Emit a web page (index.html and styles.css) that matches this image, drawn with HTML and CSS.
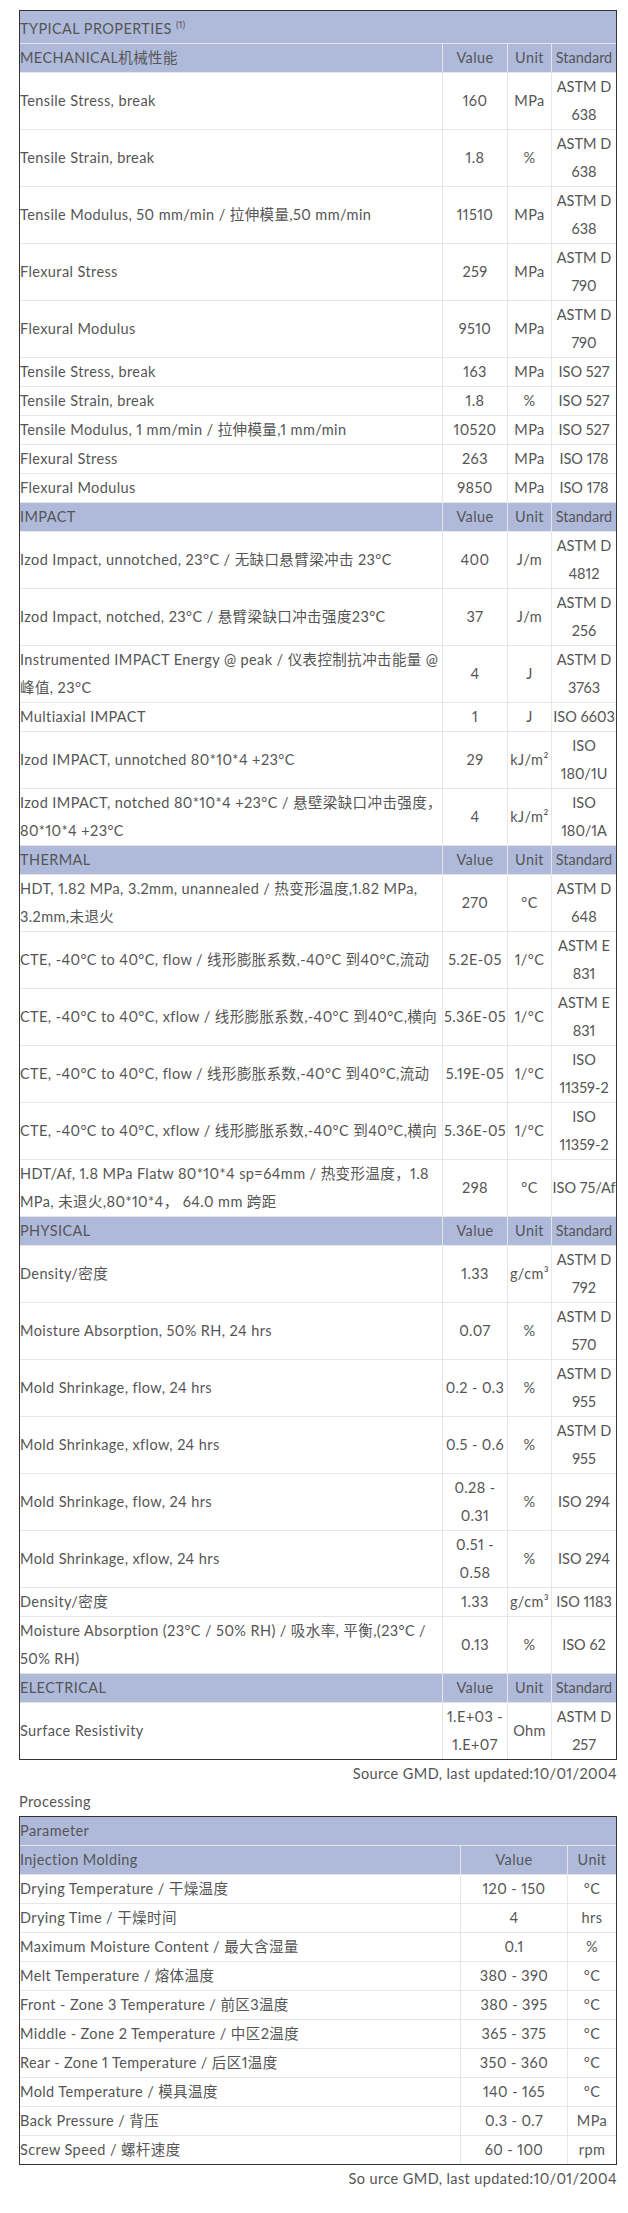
FILE: index.html
```html
<!DOCTYPE html>
<html lang="en">
<head>
<meta charset="utf-8">
<title>Typical Properties</title>
<link rel="stylesheet" href="styles.css">
</head>
<body>
<div class="page">
<table class="props">
<colgroup><col class="c-name"><col class="c-val"><col class="c-unit"><col class="c-std"></colgroup>
<tbody>
<tr class="head title"><td class="name" colspan="4">TYPICAL PROPERTIES <sup>(1)</sup></td></tr>
<tr class="head"><td class="name">MECHANICAL机械性能</td><td>Value</td><td>Unit</td><td class="std">Standard</td></tr>
<tr><td class="name">Tensile Stress, break</td><td>160</td><td>MPa</td><td class="std">ASTM D<br>638</td></tr>
<tr><td class="name">Tensile Strain, break</td><td>1.8</td><td>%</td><td class="std">ASTM D<br>638</td></tr>
<tr><td class="name">Tensile Modulus, 50 mm/min / 拉伸模量,50 mm/min</td><td>11510</td><td>MPa</td><td class="std">ASTM D<br>638</td></tr>
<tr><td class="name">Flexural Stress</td><td>259</td><td>MPa</td><td class="std">ASTM D<br>790</td></tr>
<tr><td class="name">Flexural Modulus</td><td>9510</td><td>MPa</td><td class="std">ASTM D<br>790</td></tr>
<tr><td class="name">Tensile Stress, break</td><td>163</td><td>MPa</td><td class="std">ISO 527</td></tr>
<tr><td class="name">Tensile Strain, break</td><td>1.8</td><td>%</td><td class="std">ISO 527</td></tr>
<tr><td class="name">Tensile Modulus, 1 mm/min / 拉伸模量,1 mm/min</td><td>10520</td><td>MPa</td><td class="std">ISO 527</td></tr>
<tr><td class="name">Flexural Stress</td><td>263</td><td>MPa</td><td class="std">ISO 178</td></tr>
<tr><td class="name">Flexural Modulus</td><td>9850</td><td>MPa</td><td class="std">ISO 178</td></tr>

<tr class="head"><td class="name">IMPACT</td><td>Value</td><td>Unit</td><td class="std">Standard</td></tr>
<tr><td class="name">Izod Impact, unnotched, 23°C / 无缺口悬臂梁冲击 23°C</td><td>400</td><td>J/m</td><td class="std">ASTM D<br>4812</td></tr>
<tr><td class="name">Izod Impact, notched, 23°C / 悬臂梁缺口冲击强度23°C</td><td>37</td><td>J/m</td><td class="std">ASTM D<br>256</td></tr>
<tr><td class="name">Instrumented IMPACT Energy @ peak / 仪表控制抗冲击能量 @<br>峰值, 23°C</td><td>4</td><td>J</td><td class="std">ASTM D<br>3763</td></tr>
<tr><td class="name">Multiaxial IMPACT</td><td>1</td><td>J</td><td class="std">ISO 6603</td></tr>
<tr><td class="name">Izod IMPACT, unnotched 80*10*4 +23°C</td><td>29</td><td>kJ/m²</td><td class="std">ISO<br>180/1U</td></tr>
<tr><td class="name">Izod IMPACT, notched 80*10*4 +23°C / 悬壁梁缺口冲击强度，<br>80*10*4 +23°C</td><td>4</td><td>kJ/m²</td><td class="std">ISO<br>180/1A</td></tr>

<tr class="head"><td class="name">THERMAL</td><td>Value</td><td>Unit</td><td class="std">Standard</td></tr>
<tr><td class="name">HDT, 1.82 MPa, 3.2mm, unannealed / 热变形温度,1.82 MPa,<br>3.2mm,未退火</td><td>270</td><td>°C</td><td class="std">ASTM D<br>648</td></tr>
<tr><td class="name">CTE, -40°C to 40°C, flow / 线形膨胀系数,-40°C 到40°C,流动</td><td>5.2E-05</td><td>1/°C</td><td class="std">ASTM E<br>831</td></tr>
<tr><td class="name">CTE, -40°C to 40°C, xflow / 线形膨胀系数,-40°C 到40°C,横向</td><td>5.36E-05</td><td>1/°C</td><td class="std">ASTM E<br>831</td></tr>
<tr><td class="name">CTE, -40°C to 40°C, flow / 线形膨胀系数,-40°C 到40°C,流动</td><td>5.19E-05</td><td>1/°C</td><td class="std">ISO<br>11359-2</td></tr>
<tr><td class="name">CTE, -40°C to 40°C, xflow / 线形膨胀系数,-40°C 到40°C,横向</td><td>5.36E-05</td><td>1/°C</td><td class="std">ISO<br>11359-2</td></tr>
<tr><td class="name">HDT/Af, 1.8 MPa Flatw 80*10*4 sp=64mm / 热变形温度，1.8<br>MPa, 未退火,80*10*4， 64.0 mm 跨距</td><td>298</td><td>°C</td><td class="std">ISO 75/Af</td></tr>

<tr class="head"><td class="name">PHYSICAL</td><td>Value</td><td>Unit</td><td class="std">Standard</td></tr>
<tr><td class="name">Density/密度</td><td>1.33</td><td>g/cm³</td><td class="std">ASTM D<br>792</td></tr>
<tr><td class="name">Moisture Absorption, 50% RH, 24 hrs</td><td>0.07</td><td>%</td><td class="std">ASTM D<br>570</td></tr>
<tr><td class="name">Mold Shrinkage, flow, 24 hrs</td><td>0.2 - 0.3</td><td>%</td><td class="std">ASTM D<br>955</td></tr>
<tr><td class="name">Mold Shrinkage, xflow, 24 hrs</td><td>0.5 - 0.6</td><td>%</td><td class="std">ASTM D<br>955</td></tr>
<tr><td class="name">Mold Shrinkage, flow, 24 hrs</td><td>0.28 -<br>0.31</td><td>%</td><td class="std">ISO 294</td></tr>
<tr><td class="name">Mold Shrinkage, xflow, 24 hrs</td><td>0.51 -<br>0.58</td><td>%</td><td class="std">ISO 294</td></tr>
<tr><td class="name">Density/密度</td><td>1.33</td><td>g/cm³</td><td class="std">ISO 1183</td></tr>
<tr><td class="name">Moisture Absorption (23°C / 50% RH) / 吸水率, 平衡,(23°C /<br>50% RH)</td><td>0.13</td><td>%</td><td class="std">ISO 62</td></tr>

<tr class="head"><td class="name">ELECTRICAL</td><td>Value</td><td>Unit</td><td class="std">Standard</td></tr>
<tr><td class="name">Surface Resistivity</td><td>1.E+03 -<br>1.E+07</td><td>Ohm</td><td class="std">ASTM D<br>257</td></tr>
</tbody>
</table>
<p class="source">Source GMD, last updated:10/01/2004</p>

<p class="section">Processing</p>
<table class="props proc">
<colgroup><col class="p-name"><col class="p-val"><col class="p-unit"></colgroup>
<tbody>
<tr class="head"><td class="name" colspan="3">Parameter</td></tr>
<tr class="head"><td class="name">Injection Molding</td><td>Value</td><td>Unit</td></tr>
<tr><td class="name">Drying Temperature / 干燥温度</td><td>120 - 150</td><td>°C</td></tr>
<tr><td class="name">Drying Time / 干燥时间</td><td>4</td><td>hrs</td></tr>
<tr><td class="name">Maximum Moisture Content / 最大含湿量</td><td>0.1</td><td>%</td></tr>
<tr><td class="name">Melt Temperature / 熔体温度</td><td>380 - 390</td><td>°C</td></tr>
<tr><td class="name">Front - Zone 3 Temperature / 前区3温度</td><td>380 - 395</td><td>°C</td></tr>
<tr><td class="name">Middle - Zone 2 Temperature / 中区2温度</td><td>365 - 375</td><td>°C</td></tr>
<tr><td class="name">Rear - Zone 1 Temperature / 后区1温度</td><td>350 - 360</td><td>°C</td></tr>
<tr><td class="name">Mold Temperature / 模具温度</td><td>140 - 165</td><td>°C</td></tr>
<tr><td class="name">Back Pressure / 背压</td><td>0.3 - 0.7</td><td>MPa</td></tr>
<tr><td class="name">Screw Speed / 螺杆速度</td><td>60 - 100</td><td>rpm</td></tr>
</tbody>
</table>
<p class="source">So urce GMD, last updated:10/01/2004</p>
</div>
</body>
</html>
```

FILE: styles.css
```css
html, body {
  margin: 0;
  padding: 0;
  background: #ffffff;
}

body {
  color: #555555;
  font-family: "Lato", "Noto Sans CJK SC", sans-serif;
  font-size: 14.5px;
  line-height: 28px;
  letter-spacing: 0.4px;
  font-variant-numeric: proportional-nums;
}

.page {
  padding: 10px 11px 0 19px;
}

.props {
  width: 598px;
  table-layout: fixed;
  border-collapse: separate;
  border-spacing: 0;
  border: 1px solid #333333;
}

.c-name { width: 423px; }
.c-val { width: 65px; }
.c-unit { width: 44px; }
.c-std { width: 64px; }

.p-name { width: 441px; }
.p-val { width: 107px; }
.p-unit { width: 48px; }

.props td {
  padding: 0;
  border-right: 1px solid #e6e6e6;
  border-bottom: 1px solid #e6e6e6;
  vertical-align: middle;
  text-align: center;
  white-space: nowrap;
  overflow: visible;
}

.props td:last-child {
  border-right: 0;
}

.props tr:last-child td {
  border-bottom: 0;
}

.props td.name {
  text-align: left;
}

.props td.std {
  letter-spacing: 0;
}

.props tr.head td {
  background: #afbadb;
}

.props tr.title td {
  padding-top: 4px;
}

.props sup {
  font-size: 10px;
  line-height: 0;
  vertical-align: 6px;
  letter-spacing: 0;
}

.source {
  margin: 0;
  text-align: right;
}

.section {
  margin: 0;
}
```
